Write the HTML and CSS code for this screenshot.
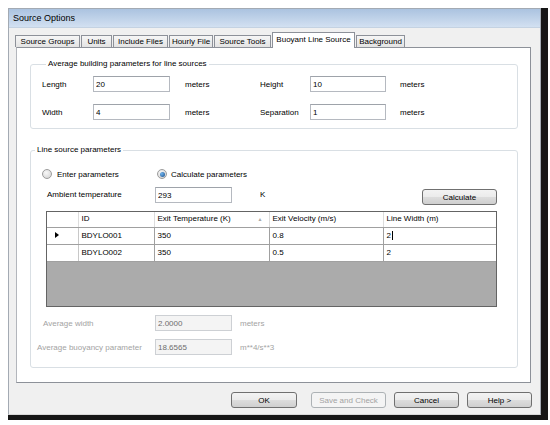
FILE: index.html
```html
<!DOCTYPE html>
<html lang="en">
<head>
    <meta charset="UTF-8">
    <title>Source Options</title>
    <link rel="stylesheet" href="styles.css">
</head>
<body>
    <div class="frame">
        <div class="window">
            <div class="titlebar">Source Options</div>
            <div class="window-body">
                <!-- tabs -->
                <div class="tabs">
                    <div class="tab tab-groups">Source Groups</div>
                    <div class="tab tab-units">Units</div>
                    <div class="tab tab-include">Include Files</div>
                    <div class="tab tab-hourly">Hourly File</div>
                    <div class="tab tab-tools">Source Tools</div>
                    <div class="tab tab-buoyant active">Buoyant Line Source</div>
                    <div class="tab tab-background">Background</div>
                </div>

                <div class="panel">
                    <fieldset class="group group-building">
                        <legend>Average building parameters for line sources</legend>
                        <div class="param-grid">
                            <span class="lbl">Length</span>
                            <input class="field" type="text" value="20">
                            <span class="unit">meters</span>
                            <span class="lbl">Height</span>
                            <input class="field" type="text" value="10">
                            <span class="unit">meters</span>

                            <span class="lbl">Width</span>
                            <input class="field" type="text" value="4">
                            <span class="unit">meters</span>
                            <span class="lbl">Separation</span>
                            <input class="field" type="text" value="1">
                            <span class="unit">meters</span>
                        </div>
                    </fieldset>

                    <fieldset class="group group-line">
                        <legend>Line source parameters</legend>

                        <div class="radio-row">
                            <span class="radio-item first"><span class="radio"></span>Enter parameters</span>
                            <span class="radio-item"><span class="radio checked"></span>Calculate parameters</span>
                        </div>

                        <div class="ambient-row">
                            <span class="ambient-lbl">Ambient temperature</span>
                            <input class="field" type="text" value="293">
                            <span class="kelvin">K</span>
                            <button class="btn calc-btn">Calculate</button>
                        </div>

                        <div class="grid">
                            <table>
                                <colgroup>
                                    <col class="c-sel">
                                    <col class="c-id">
                                    <col class="c-temp">
                                    <col class="c-vel">
                                    <col class="c-width">
                                </colgroup>
                                <thead>
                                    <tr>
                                        <th class="sel"></th>
                                        <th>ID</th>
                                        <th>Exit Temperature (K)<span class="sort">&#9650;</span></th>
                                        <th>Exit Velocity (m/s)</th>
                                        <th>Line Width (m)</th>
                                    </tr>
                                </thead>
                                <tbody>
                                    <tr>
                                        <td class="sel"><span class="row-arrow"></span></td>
                                        <td>BDYLO001</td>
                                        <td>350</td>
                                        <td>0.8</td>
                                        <td class="editing">2<span class="caret"></span></td>
                                    </tr>
                                    <tr>
                                        <td class="sel"></td>
                                        <td>BDYLO002</td>
                                        <td>350</td>
                                        <td>0.5</td>
                                        <td>2</td>
                                    </tr>
                                </tbody>
                            </table>
                        </div>

                        <div class="avg-row">
                            <span class="avg-lbl lbl-width">Average width</span>
                            <input class="field disabled" type="text" value="2.0000" disabled>
                            <span class="avg-unit">meters</span>
                        </div>
                        <div class="avg-row">
                            <span class="avg-lbl lbl-buoy">Average buoyancy parameter</span>
                            <input class="field disabled" type="text" value="18.6565" disabled>
                            <span class="avg-unit">m**4/s**3</span>
                        </div>
                    </fieldset>
                </div>

                <!-- dialog buttons -->
                <div class="buttons">
                    <button class="btn btn-ok">OK</button>
                    <button class="btn btn-save" disabled>Save and Check</button>
                    <button class="btn btn-cancel">Cancel</button>
                    <button class="btn btn-help">Help &gt;</button>
                </div>
            </div>
        </div>
    </div>
</body>
</html>
```

FILE: styles.css
```css
* {
    margin: 0;
    padding: 0;
    box-sizing: border-box;
}

body {
    background: #fff;
    font-family: "Liberation Sans", Arial, sans-serif;
    font-size: 8px;
    color: #000;
}

.frame {
    margin: 8px 0 0 8px;
    width: 540px;
    border-right: 7px solid #161616;
    border-bottom: 5px solid #161616;
}

.window {
    height: 407px;
    background: #f0f0f0;
    border: 1px solid #a3aab3;
    border-bottom-color: #d8d8d8;
    display: flex;
    flex-direction: column;
}

.titlebar {
    height: 19px;
    line-height: 19px;
    padding-left: 4px;
    font-size: 9px;
    background: linear-gradient(#abc3e0, #d2e0f1);
    border-bottom: 1px solid #c4d2e2;
}

.window-body {
    flex: 1;
    padding: 4px 9px 0 7px;
}

/* tabs */
.tabs {
    display: flex;
    align-items: flex-end;
    height: 15px;
    margin-left: -1px;
}

.tab {
    height: 12px;
    line-height: 11px;
    margin-right: 1px;
    border: 1px solid #8d9199;
    border-bottom: none;
    background: linear-gradient(#f6f6f6, #e3e3e3);
    text-align: center;
    white-space: nowrap;
}

.tab.active {
    position: relative;
    z-index: 1;
    height: 16px;
    line-height: 14px;
    margin-bottom: -1px;
    background: #fff;
}

.tab-groups { width: 65px; }
.tab-units { width: 31px; }
.tab-include { width: 55px; }
.tab-hourly { width: 44px; }
.tab-tools { width: 57px; }
.tab-buoyant { width: 83px; }
.tab-background { width: 49px; }

.panel {
    height: 336px;
    background: #fff;
    border: 1px solid #8d9199;
    border-left-color: #b3b6bc;
    padding: 0 12px 0 13px;
}

/* group boxes */
.group {
    border: 1px solid #d9dfe4;
    border-radius: 3px;
    min-width: 0;
}

.group legend {
    margin-left: 4px;
    padding: 0 2px;
    line-height: 10px;
}

.group-building {
    margin-top: 11px;
    padding: 7px 0 8px 11px;
}

.group-line {
    margin-top: 16px;
    padding: 13px 20px 12px 0;
}

.param-grid {
    display: grid;
    grid-template-columns: 51px 77px 90px 50px 76px auto;
    grid-auto-rows: 16px;
    row-gap: 12px;
    align-items: center;
}

.unit {
    padding-left: 15px;
}

.param-grid .unit:nth-child(6),
.param-grid .unit:last-child {
    padding-left: 14px;
}

.field {
    height: 16px;
    width: 77px;
    border: 1px solid #b5b9c0;
    border-top-color: #9ea3aa;
    padding: 0 2px;
    font-family: inherit;
    font-size: 8px;
    color: #000;
    background: #fff;
    outline: none;
}

.param-grid .field {
    width: 100%;
}

.field.disabled {
    background: #f4f4f4;
    border-color: #cdd0d4;
    color: #6d6d6d;
}

/* radio buttons */
.radio-row {
    display: flex;
    align-items: center;
    height: 12px;
    padding-left: 11px;
}

.radio-item {
    display: flex;
    align-items: center;
    gap: 5px;
}

.radio-item.first {
    width: 115px;
}

.radio-item:not(.first) {
    gap: 4px;
}

.radio {
    width: 10px;
    height: 10px;
    border-radius: 50%;
    border: 1px solid #9c9c9c;
    background: radial-gradient(circle at 40% 35%, #f8f8f8, #cfcfcf);
    display: flex;
    align-items: center;
    justify-content: center;
}

.radio.checked::after {
    content: "";
    width: 5px;
    height: 5px;
    border-radius: 50%;
    background: radial-gradient(circle at 35% 35%, #6fb4ef, #1b4d86);
}

.ambient-row {
    display: flex;
    align-items: flex-start;
    height: 18px;
    margin-top: 7px;
}

.ambient-lbl {
    width: 108px;
    margin-left: 16px;
    line-height: 16px;
}

.kelvin {
    margin-left: 28px;
    line-height: 16px;
}

.calc-btn {
    margin-left: auto;
    margin-top: 2px;
    width: 75px;
}

/* buttons */
.btn {
    height: 16px;
    border: 1px solid #707070;
    border-radius: 3px;
    background: linear-gradient(#f3f3f3 0%, #ebebeb 50%, #dddddd 51%, #cfcfcf 100%);
    font-family: inherit;
    font-size: 8px;
    color: #000;
}

.btn:disabled {
    border-color: #adb2b5;
    background: #f4f4f4;
    color: #a3a3a3;
}

/* data grid */
.grid {
    margin: 6px 0 0 15px;
    width: 451px;
    height: 96px;
    border: 1px solid #646464;
    background: #ababab;
}

.grid table {
    width: 449px;
    table-layout: fixed;
    border-collapse: collapse;
}

.c-sel { width: 31px; }
.c-id { width: 76px; }
.c-temp { width: 115px; }
.c-vel { width: 114px; }
.c-width { width: 113px; }

.grid th {
    height: 15px;
    line-height: 14px;
    font-weight: normal;
    text-align: left;
    padding-left: 3px;
    background: #fff;
    border-right: 1px solid #dcdcdc;
    border-bottom: 1px solid #a0a0a0;
}

.grid th:last-child {
    border-right: none;
}

.sort {
    float: right;
    margin-right: 6px;
    font-size: 5px;
    line-height: 14px;
    color: #a9a9a9;
}

.grid td {
    height: 17px;
    padding-left: 3px;
    background: #fff;
    border-right: 1px solid #a0a0a0;
    border-bottom: 1px solid #a0a0a0;
}

.grid td:last-child {
    border-right: none;
}

.grid td.sel {
    padding-left: 8px;
    border-right-color: #c8c8c8;
}

.row-arrow {
    display: inline-block;
    width: 0;
    height: 0;
    border-left: 4px solid #000;
    border-top: 3px solid transparent;
    border-bottom: 3px solid transparent;
}

.caret {
    display: inline-block;
    width: 1px;
    height: 9px;
    margin-left: 1px;
    vertical-align: -2px;
    background: #000;
}

.avg-row {
    display: flex;
    align-items: center;
    height: 16px;
    margin-top: 8px;
    color: #a3a3a3;
}

.lbl-width {
    margin-left: 12px;
    width: 112px;
}

.lbl-buoy {
    margin-left: 6px;
    width: 118px;
}

.avg-unit {
    margin-left: 8px;
}

.buttons {
    display: flex;
    justify-content: flex-end;
    gap: 8px;
    margin-top: 9px;
    margin-right: -1px;
}

.btn-ok {
    width: 66px;
    margin-right: 6px;
}

.btn-save {
    width: 75px;
}

.btn-cancel,
.btn-help {
    width: 65px;
}
```
